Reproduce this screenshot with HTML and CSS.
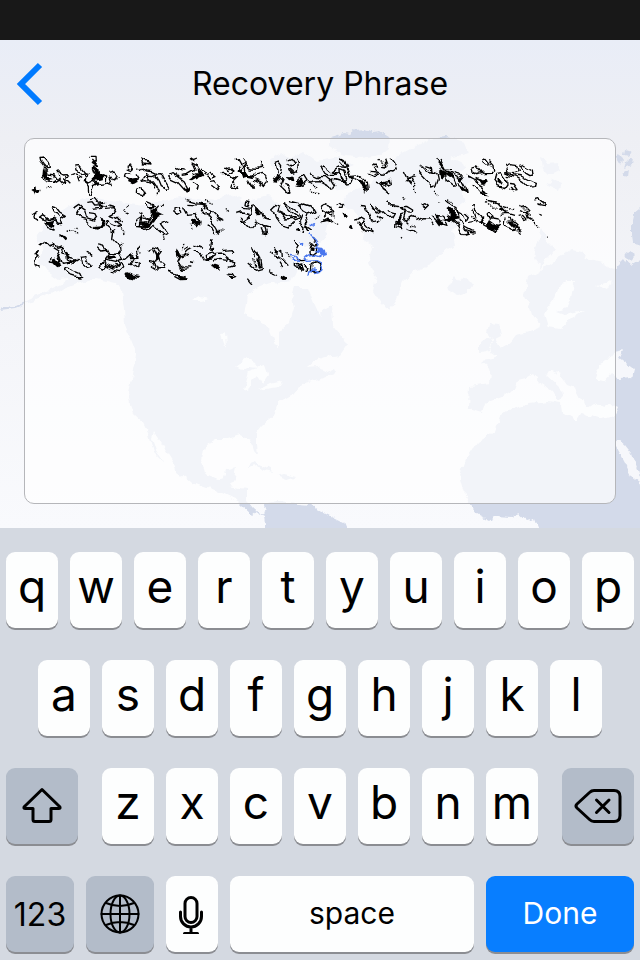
FILE: index.html
```html
<!DOCTYPE html>
<html lang="en">
<head>
<meta charset="utf-8">
<meta name="viewport" content="width=device-width, initial-scale=1">
<title>Recovery Phrase</title>
<link rel="stylesheet" href="styles.css">
</head>
<body>
<div class="status-bar"></div>
<main class="screen">
  <svg class="map" viewBox="0 40 640 488" preserveAspectRatio="xMidYMax slice" aria-hidden="true">
    <defs>
      <filter id="coast" x="0" y="0" width="1" height="1">
        <feTurbulence type="fractalNoise" baseFrequency="0.12" numOctaves="2" seed="4"/>
        <feDisplacementMap in="SourceGraphic" scale="7" xChannelSelector="R" yChannelSelector="G"/>
      </filter>
    </defs>
    <g filter="url(#coast)">
    <g class="land">
      <path d="M0 310L3 307 15 306 23 302 31 299 45 292 61 285 70 278 58 279 45 270 38 260 45 250 36 240 42 228 55 216 70 205 88 196 110 201 145 205 180 197 215 201 230 194 245 202 268 196 280 206 300 201 320 212 330 224 323 240 313 247 300 244 292 254 300 264 293 280 270 283 258 287 247 296 244 315 258 320 270 330 274 340 279 349 279 332 290 322 294 308 292 297 295 288 308 288 314 303 320 316 328 307 332 304 333 325 343 338 347 345 340 355 325 357 315 360 307 367 319 366 325 374 336 369 338 373 320 379 308 382 298 388 293 394 279 402 276 413 262 425 256 433 256 445 257 455 253 450 250 440 240 435 228 439 215 439 205 445 202 461 205 474 217 479 224 477 226 471 237 468 235 478 230 486 246 489 246 501 253 509 259 514 266 509 265 505 278 502 286 503 310 505 327 514 337 519 345 523 350 535 266 535 264 515 257 511 252 515 242 506 237 501 220 493 207 488 190 482 177 472 174 464 164 448 154 432 152 438 157 453 164 463 154 453 149 435 143 423 135 416 131 405 129 391 133 375 137 355 130 337 125 325 124 308 121 292 116 283 97 279 80 283 58 291 35 300 15 308Z"/>
      <path d="M329 138L336 136 343 133 350 134 355 130 365 129 373 132 380 131 390 137 389 148 380 155 360 158 342 155 329 147Z"/>
      <path d="M270 158l12-5 9 6 13-7 13 9 23-4 14 8-17 7 16 8-7 10-30-3-14-9-22 2z"/>
      <path d="M393 158L418 145 430 139 447 137 465 142 468 153 450 158 466 166 456 174 475 181 459 188 466 202 454 211 464 224 452 230 456 244 443 252 431 265 415 271 403 282 397 298 389 310 381 304 373 291 376 278 369 264 374 247 362 239 366 225 353 211 340 205 350 192 370 184 377 170Z"/>
      <path d="M447 286l6-3 2-7 5 6 6-3 7 4-6 9-11 3-8-5z"/>
      <path d="M534 257l8 12 16-12 14-7 9 2 5 7 16 4 12 8-3 10-14 4 10 5 3-5 3-16 8 2 6-11 6 5 17-10V535H540l-6-16-7 2-8-7-7 3-17-1-6 4-12-6-8-10-5-14-4-15 6-15 11-17 17-11 6-16 13-8 16-5 19-2 13 2 1 9 14 8 5-8 12 5 9 2 12-3 4-9-8-4-7 3-9-3-6 4-8-9-5-10-8-3-8-11-7-3-7 3 13 12 7 7-3 4-4 4-6-10-13-9-6-8-8 5-8 2-3 8-12 8-17 6-3 9-14-4 1-22 21-3 1-13-10-8 12-2 5-10 11-6 7-9 13-3 13-5-10-13-3-11-5-9 4-16 12-7 8-13 6-9-6-6-6-17z"/>
      <path d="M492 354l7 3 2-7-5-11 6-3-3-13-9-1-3 11 7 11-5 8zm-12-12l8-6 6 4-5 10-9 2z"/>
      <path d="M616 157l4-3 4 6-3 5zm9-7l6 2-2 4-5-1zm2 9l5-2-1 8-7 3zM622 173l7-4-1 8-5-1zM632 225l3-14 9-7v40l-11-2-1-7zm-8 30l6-4 6 4-5 5zm-7 10l5-5 5 7-5 8-5-2zM540 157l7 3-1 5 12-1 2 6-12 4-6-6zm12 22l9 4-3 8-10-4z"/>
      <path d="M247 468l6-6 11 4 11 6-13-2-5-4zm29 8l8-2 13 3-10 3z"/>
    </g>
    <g class="water">
      <path d="M602 380l-8-2 5-13 6-3 8-10 10-2-5 8 16 12-2 8-12 1-9-6-7 8z"/>
      <path d="M235 367l12-9 9 4 2 6-9-1-7 4zM244 389l5-18 8-3 8-2 3 9-6 9-5-8-5 5-4 10zM258 390l12-6 13-3-4 6zM192 301l7-4 10 2-9 2zM221 335l4-3 1 17zM567 282l7 0-3 16-4 9-10 4 8 3 20-4-14 9-10 9-13-2-4-13 10-13 6-16z"/>
      <path d="M617 439l8 7 7 9 6 16 4 14-10-7-7-15-10-19z"/>
      <path d="M583 398l3 8 5 2-2 7-6-2z"/>
    </g>
    </g>
  </svg>

  <header class="nav">
    <button class="back" type="button" aria-label="Back">
      <svg viewBox="0 0 28 44" aria-hidden="true"><path d="M24 3L5 22 24 41"/></svg>
    </button>
    <h1 class="title">Recovery Phrase</h1>
  </header>

  <div class="field">
    <textarea class="phrase" aria-label="Recovery Phrase"></textarea>
    <svg class="scribble" viewBox="24 145 540 145" aria-hidden="true">
      <defs>
        <filter id="wobble" x="-0.05" y="-0.05" width="1.1" height="1.1">
          <feTurbulence type="fractalNoise" baseFrequency="0.09" numOctaves="1" seed="7"/>
          <feDisplacementMap in="SourceGraphic" scale="10" xChannelSelector="R" yChannelSelector="G"/>
        </filter>
      </defs>
      <g filter="url(#wobble)">
      <g transform="translate(24 145) scale(.333333)">
        <path class="ink" d="M51 40l10-1 13 15 2 13-7 1-8-8-8-11zM59 65l11 13 3 12 17 2 8 12-13 8-21-1-14-12 9-10 3 13 14 4-8-12-9-14M94 83l13-2 11 6 15-1 4 10-12 3-9 9 3 10-10-7-9-9 7-7M114 100l10 12 9 9M145 89l12-5 13 6-9 5 5 14M153 60l12-1 14 18-9 4-14-9zM196 40h20l1 11-9 7 13 9-16 5 5 14 7 12M205 48l13 13M189 83l-8 25 14 12 16-8 12 7-12 6-9 23-8-3-1-18-9-15 1-17-6-15zM233 92l15 4-1 19-18 3-15-10M250 82l17-4 13 11-8 13-15-6 8 23-14-5M305 65l8-5 12 8-7 6-13-5M322 83l-18-3-3 13 14 12 20 9 8-13-10-16M354 43l14 5 7 15-16-3zM347 67l15 11 25 2 13 6-14 6-20-2-12 17 14-3 20 7 10 14 8 19-11 6M363 84l23 25 6 21M397 87l14-1 13 24 12 19-8 7-16-8-6-15-13-17zM430 83l12-3 15 12 20 15 15 26-10 2-23-26-20-9-9-12M450 67l20 9 18 2M470 91l20-3 20-12-9-22 20 10 5 17-18 9M498 40l10 7 11-5M509 112l14 8-4 18M341 134l12-5 6 12-7 11-12-4zM200 164l14-4 10 12 16-3-12 8 18 8M190 175l20-2 8 10 20-1-6 8-25 3M30 205l9-5-3 15 5 15M82 178l14 5 14 18 17 10-14 9 6 19-15-2-12-15-16-1-17-12-10 8 14 11M82 180l6 20 22 12M55 226l35-10M61 234l10 14 19 4 2-15M151 187l13-9 9 8-12 11-6 14 16 14 16 5 17 18 28-3 6-17-8-12M165 190l17 12 5 19 22 7 9-12-6-11-17-2M243 190l24-2 8 12-17 9 22 8 9 14-16-2 21 15-13 6-22-10-9-16-7 21 16 14M250 180l20 6M303 181l8-6M304 202l11 6M343 207l10-4 3 14-14 10-4 14 20 2 18-19-16-13M372 170l14 6 5 12-16-1-9-10M360 219l15 7 13-22 13-16M388 240l35 30 12-6-20-28 18-8M357 216l-5 24 18 13 22-13M408 190l13-12M450 182l15 2 9 23-12 7-12-17zM477 185l14 26 25-3 12 22-9 13M488 164l44 12M490 175l41 3 10 9"/>
        <path class="ink" d="M32 327l14-10-7 10 9 4-14 14-1 17 14 8M50 301l15-12 11 11 12-6 8 16 12-4 6 18 22 5M83 308l16 10 9 25-8 14-18-3 2-18M110 309l6-2 12 17 2 21 20 10 14-9M105 328l10 27 38-5M169 337l20-2 15 31-14 4-18-16zM188 322l17 6M120 374l10-6 40 17 6 12-11 2-26-8zM220 296l22 5 6 18-12 2-15-14M260 264l9-7-3 26 16 17 4 22-14 8-18-5-7-14M244 348l14-20 28-1 10 16-20 12-14-3zM227 356l15-7 6 15-8 9-12-6zM247 358l25 12 18-11-5-10M289 356l9-4 4 10-18 18-18-4M299 342l18-15 14 9-11 17 24 18 2-15-16-10M346 303l-12 14 5 17-18 1M377 317l10-11 13 5 10 17-8 10 6 15 15 2-4 15-24 2-20-12M389 311l10 20-1 15-10 12M369 346l17 3 10 15M455 315l11 16-8 16 8 13 14 10 14-2M462 331l18-4 14-14 11-6M457 348l20 14 28 1M481 313l13-8M483 325l12 4M498 347l12 3M430 378l22 8 31 5 3 12-17 1-18-10M514 297l23 10M512 317l18 12 8 14"/>
        <path class="blob" d="M22 133l8-1 7-5 3 9 13-2-4 13-10-6-3 8-5-11zM57 68l13 12 4 15 15 7-19 3-15-13zM209 69l17 7 2 13 11 5-3 9-18 4-8 8-6-9 11-11zM317 101l23-3 4 13-18 7-14-7zM480 132l18-2 3 11-10 5zM515 70l15 8 5 14-12 6-13 8-13-1 21-15zM385 190l9 3 5 14 14 7-14 4-10 16-6-8 4-18zM55 218l19 10 17-4-5 14-16-1zM350 232l14-4 8 6 12-12 4 8-10 14-12 3zM205 243l22-2 9-11 2-17 6 16-8 18-20 4zM106 266l10 6 8 15-5 5-12-13zM80 230l10 9-7 7-20-9zM94 334l12 18 2 8-12 4-8-12zM124 320l13 15 12 10-18-4zM252 336l22-2 6 8-20 7-10-3zM270 359l16 3-1 7-13-5zM306 386l12-1 12 12 13 2-6 6-21-5-12-9zM396 331l9-6 1 22-8 6zM453 310l7 10 11 7-14 9zM462 386l25 11-8 8-16-7zM508 223l12 6 11 5-15 8-10 1z"/>
        <path class="speck" d="M97 76l12 17M124 90l9 10M270 100l17-4M340 65l18 14M412 99l12 15M453 83l8 12M150 251l12-1M276 217l22 15M282 243l23 25M297 190l12 15M131 258l32 6M405 251l22 20M52 338l-10-15M64 290l22 12M187 344l10 15M280 309l19-16M337 309l12 13M376 351l28 18M418 270l2 20M434 380l34 9M480 300l-8 15M498 239l6 15M65 130l15 3"/>
      </g>
      <g transform="translate(200 145) scale(.333333)">
        <path class="ink" d="M0 69l13 9-5 7M14 87l15-6 22 17-18 6zM33 112l14-2 14 13-7 14-17-13M65 89l17-2 13 13 18-1-18 18-3 10 19 9 5-9M77 70l14-4 11 9-13 7zM108 40l12 22 17-9M125 42l10 15 18 12 18 1 17-4-4-15M120 78l15-18 3 20 22 13 21-8 16 10 5 15-10 12-16-10-20-9M145 101l18 30M165 98l14 23M219 93l10 5 2-23-6-20 10-4 10 14-4 21-10 7M236 98l13 11-7 17 17 17 11-5-5-12-12-5M257 45l11-5 12 17-9 6-12-8M283 40l9 16-3 21-11 5-10-9M270 68l13 12M291 104l10-9 13-1 10 16-18 14-18-6M303 97l9 19M330 87l17 8 34-1 14 12 12 19-15 7-13-15-18-10-23 1-12 11M363 64l12-4 20 18 15 9-22 3-18-13zM401 80l20-12 18 3 7 20 14 14-4 10-19 2-15-11-3-16zM420 77l14 5 6 17-10 10-9-14zM418 41l12 6 10 16-6 4-14-16M395 102l20 6 23 3M450 91l15-1 18 8 16 14 3 20-12-4-12-18-14-8zM517 67l8-7 12 7M512 82l26 2M502 87l18 8 20-8M0 178l14 2 16 19-4 12-13-5-13-20M14 196l9 22 24 25 12 20M30 197l21 21 16 8M20 240l15 4 10 20M137 171l10 1-5 14-7-4zM112 209l16-5 16 5 4 11-15 10-18 3M128 190l22 3 5-9 10-2 19 20 8 14 17 5M148 192l3 17-10 12M120 222l30 29 22-24M167 230l25 13 8 23-11-3-6-13M190 246l20 6M214 190l12-12 13 5-5 15 20 24 29-3M232 200l34 13 14 14 15-5-1-15-18-12-24-16M215 186l8 25 19 24 24 8 15-11M250 179l22 25 19 13M270 171l33 9M305 184l10-7 19 6 8 14-13 9-18-9zM300 186l15 12M307 208l-8 21 16 13-3 19M325 205l-6 18 10 29M341 249l-21-14M366 184l10-6 15 6 10 16-16 9-17-10zM392 182l4 15M366 220l13-12 18 5M411 173l10-5 10 9-2 8-13-2M482 187l13 2 10 24 22 15M510 180l12 17 16 7M463 226l12-8 14 8-7 12M470 230l34 32 9 4-2-10-26-28"/>
        <path class="ink" d="M13 325l22-6 12 11-8 12-24 1zM46 325l28-1 16 12-4 13-29-3-15 5M70 314l24-3 5 12M83 337l21 13-2 13-13 4M36 282l-3 18-4 9M77 384l23 2 8 12M142 353l24 20 21-6-5-30-22-21M148 310l14 15 1 15M172 319l8 15-3 14M223 308l10 16 15-8 2 23M224 334l12 2 13 9 16 17M234 347l8 13M280 291l12 15-8 15 12 6M291 341l12 6 18-1M289 360l17-3 5 11-8 7-14-8zM312 354l12 11-7 9M333 359l13-6 14 8 2 12-16 8-15-10zM328 309l5-13 10 5 8-4-2 27-10 7-12-4zM337 279l7 14M145 401l12 15M201 377l33 12"/>
        <path class="blob" d="M115 62l10 14 18-2 7 14 18-6-9 14-17-4-12 8-5-15-12-7zM222 100l13-8 5 6-3 9-12-1zM258 96l14 1 8-7 3 14-14 5-14-8zM296 101l11 1 5 12-9 9-12-10zM480 110l10 1 9 15 1 14-12-9zM166 185l10 5 8 20-10 1-9-14zM367 226l12-6 12 4-4 4 11 2-7 5-14-6-17 4zM289 248l10-3 5 7-5 6-11-2zM427 206l11 1 3 8-8 2zM443 239l9 2 2 8-5 4-8-5zM36 305l7 5-5 7-8-6zM17 337l30-5-4 6-15 8-13-4zM32 358l23 7 8 9-21 2zM79 388l14 3 15 9-16 3zM170 341l10 9 5 13-11 2-5-12zM243 394l8-5 9 6-2 9-10 1-6-5zM227 319l13 2-8 9-9-4zM332 304l9 1-1 14-7-2zM299 360l10 6-8 6-7-5zM530 226l10 5-9 7z"/>
        <path class="speck" d="M80 66l20 3M99 96l8 31M155 115l10 17M327 113l29 17M330 134l30 17M350 89l16 22M15 170l23 8M50 255l22 4M78 184l5 10M270 176l14 3M342 222l12-10M390 225l30 18M398 205l8 15M210 323l17 15M260 322l14 17M154 343l15 23"/>
        <path class="accent-line" d="M327 262l5 16 12 8 12 16-9 5 21 7M303 294l8 2-2 8-7-5zM267 325l13 3 13 9 5 12-13-3-8-12M315 340l10-7 18-2 14 4 14-10M315 341l7 8 20-1 18 9 6 14-8 8M324 388l2-13 13-3 15 8-12 3M335 237l8-4 4 5"/>
        <path class="accent-fill" d="M352 307l20 1 6 8 3 14-10 3-10-8-18-4 14-5z"/>
      </g>
      <g transform="translate(375 145) scale(.333333)">
        <path class="ink" d="M0 67l9 12 18 9 15-7M28 41l8 22-12-2M42 44l14 18 5 13-13 9-12-3M0 107l18 9 10 21 14 10M18 111l25-8 3 12-18 10M91 78l8 16-3 15 10 13M91 108l14-10 18-6M107 115l7-14M131 65l13 2 12 11 16 4-3-17-18-6M130 82l18 19 15 16-1 9 17-3 8-23-4-18-15-5M179 43l18 19 15 19 22 6 25 14 16 31 1 7-12-5-13-22M192 45l16 30 20 2M212 88l1 20 20 16 11-6-12-27M239 83l19 5 10 12-9 8-12-17M288 63l12-3 13 15 9 10-14 4-17-10zM322 45l8-5 14 18-11 3-11-9M343 40l14 15 2 20-12 10-23 1M278 89l25 13 8 13 14 9-5 16 18 9-15-2-16-18-14-9M302 97l17 8 11 13M363 83l15-3 14 20 1 17-10 14-14-6-11-16zM389 64l15-5 20 2 6 17-12 5-21-3zM435 65l12-4 25 14 2 15-9 2-22-13zM395 91l25 5 22 14 16 17 23-2 3-13-22-7-24-12-30-5-18-8M399 112l15 2 12 17-11 3-8-11M0 188l20 17 14 13 17-2 7-13-20-6M0 207l18 17M34 171l17 4 25 3 13 22M82 185l13-1 18 11-2 10-16-2zM73 211l18-7-5 18 14 13M60 226l22 6-5 22-18-7zM94 228l14-10 18 3M95 249l17 6 14 12M138 183l9-4 10 8-6 6zM130 230l15-9 20 1 10 15M182 205l18 3 13 18 6 21-16-5-14-20zM173 212l12 12 14 19M213 169l17 8 16 8 2 24-19 9-16-11M232 219l26 37 13 14 10-3-14-25-19-16M241 190l18 11 13 28 8-14-14-13M272 246l30 16M290 181l11-3-3 20 15 14 9 18-21-4M290 198l8 22M282 232l17-3M336 166l31 5 14 16 13 4M334 209l8-5 12 10-9 9-11-5zM320 217l-2 13 22 13 19 14 18-17-3-17-22-4M380 211l20-3 20 6M393 220l-3 22 21 12 12-15-20-18M407 231l20 24M434 185l14-4 14 14-10 9-17-7M434 217l15-3 11 12M457 203l5 17 12 7M478 165l13-4 17 15-3 6-19-4M420 248l17 18"/>
        <path class="blob" d="M30 84l12-5-12 9zM17 109l18-4 6 10-18 6zM94 111l9-3 5 10-8 5zM190 85l10-9 14 9 14 2 12 13-15 2-14-10-8 9-10-4zM256 122l10 3 12 15-15-4zM274 86l17 8-10 1zM311 99l10 4 14-1 3 12-17 2zM322 129l9 4 7 8-14-1zM367 101l8 1 9 13-5 7-11-8zM195 222l16-2 13-9-3-20 8-4 11 9-1 15 12 9-18 3-4 8-10-6zM188 212l14 18 10 14-8 0-14-16zM73 207l8 6-6 17 5 12-12 3-9-8 8-15zM182 204l8 5-4 5zM342 225l20 15 12 2-8 12-16-4-15-12zM378 187l14 14 9 2-7 5-23-15zM399 230l7-1 15 15-9 1zM497 206l8 2 3 5-7-2zM444 219l13 7-9 3zM185 167l14 5-3 2zM275 255l20 6 7 5-16-1zM519 276l3 4-3 2z"/>
        <path class="speck" d="M8 43l20 13M25 128l17 19M112 110l13 28M136 60l32 15M180 138l13 8M260 92l8 23M292 82l20 8M344 47l14 24M400 132l20 7M42 177l34 2M110 212l20 12M105 239l20 5M222 168l20 6M286 214l20 18M336 173l30 15M350 170l25 4M430 181l25 14M458 199l10 18M484 177l22-4M477 231l9 14M412 252l22 7M80 154l8 7M75 274l4 4M395 190l12 3M411 192l4-6"/>
      </g>
      </g>
    </svg>
  </div>
</main>

<section class="keyboard" aria-label="Keyboard">
  <div class="row">
    <button class="key">q</button><button class="key">w</button><button class="key">e</button><button class="key">r</button><button class="key">t</button><button class="key">y</button><button class="key">u</button><button class="key">i</button><button class="key">o</button><button class="key">p</button>
  </div>
  <div class="row row-home">
    <button class="key">a</button><button class="key">s</button><button class="key">d</button><button class="key">f</button><button class="key">g</button><button class="key">h</button><button class="key">j</button><button class="key">k</button><button class="key">l</button>
  </div>
  <div class="row row-shift">
    <button class="key dark side" aria-label="Shift">
      <svg class="icon" viewBox="0 0 40 40" aria-hidden="true"><path class="line3" d="M20 3.500L2.500 20.500Q1 22.500 3.500 22.500H11V33.500Q11 35.500 13 35.500H27Q29 35.500 29 33.500V22.500H36.500Q39 22.500 37.500 20.500Z"/></svg>
    </button>
    <div class="letters">
      <button class="key">z</button><button class="key">x</button><button class="key">c</button><button class="key">v</button><button class="key">b</button><button class="key">n</button><button class="key">m</button>
    </div>
    <button class="key dark side" aria-label="Delete">
      <svg class="icon icon-wide" viewBox="0 0 48 40" aria-hidden="true"><path class="line3" d="M20 4.500H40Q46 4.500 46 10.500V29.500Q46 35.500 40 35.500H20Q17.500 35.500 15.500 33.500L3 22Q1 20 3 18L15.500 6.500Q17.500 4.500 20 4.500Z"/><path class="line3" d="M22.500 14L35 26.500M35 14L22.500 26.500"/></svg>
    </button>
  </div>
  <div class="row">
    <button class="key dark num">123</button>
    <button class="key dark globe" aria-label="Next keyboard">
      <svg class="icon" viewBox="0 0 40 40" aria-hidden="true"><g class="line2"><circle cx="20" cy="20" r="18.500"/><ellipse cx="20" cy="20" rx="9.500" ry="18.500"/><path d="M20 1.500V38.500M1.500 20H38.500M6 9Q20 15 34 9M6 31Q20 25 34 31"/></g></svg>
    </button>
    <button class="key mic" aria-label="Dictate">
      <svg class="icon" viewBox="0 0 40 40" aria-hidden="true"><g class="line3"><rect x="13" y="3.500" width="12" height="25" rx="6"/><path d="M8.500 18V22.500A10.500 10.500 0 0 0 29.500 22.500V18M19 33V39M12.500 39.500H25.500"/></g></svg>
    </button>
    <button class="key space">space</button>
    <button class="key done">Done</button>
  </div>
</section>
</body>
</html>
```
FILE: styles.css
```css
* {
  box-sizing: border-box;
}

body {
  margin: 0;
  min-height: 100vh;
  display: flex;
  flex-direction: column;
  font-family: Inter, "Liberation Sans", sans-serif;
  color: #000;
  background: #d4d9e1;
}

.status-bar {
  height: 40px;
  background: #181818;
}

.screen {
  position: relative;
  flex: 1;
  display: flex;
  flex-direction: column;
  padding-bottom: 24px;
  overflow: hidden;
  background: linear-gradient(#e9edf7, #eeeff4 20%, #f4f5f9 60%, #f9fafd);
}

.map {
  position: absolute;
  inset: 0;
  width: 100%;
  height: 100%;
}

.land {
  fill: #d3daea;
}

.water {
  fill: #f6f7fb;
}

.nav {
  position: relative;
  display: grid;
  grid-template-columns: 60px 1fr 60px;
  align-items: center;
  height: 88px;
}

.back {
  display: flex;
  padding: 0 0 0 16px;
  border: 0;
  background: none;
}

.back svg {
  width: 28px;
  height: 44px;
  fill: none;
  stroke: #007aff;
  stroke-width: 6;
}

.title {
  margin: 0;
  text-align: center;
  font-size: 32px;
  line-height: 40px;
  font-weight: 400;
}

.field {
  position: relative;
  flex: 1;
  display: flex;
  margin: 10px 24px 0;
}

.phrase {
  flex: 1;
  min-height: 180px;
  padding: 16px;
  border: 1px solid #b5b6ba;
  border-radius: 10px;
  background: rgba(255, 255, 255, 0.7);
  font: 300 34px/40px Inter, "Liberation Sans", sans-serif;
  resize: none;
  outline: 0;
}

.scribble {
  position: absolute;
  left: 0;
  top: 7px;
  width: 540px;
  height: 145px;
  max-width: 100%;
  overflow: visible;
  pointer-events: none;
}

.ink,
.speck,
.accent-line {
  fill: none;
  stroke: #000;
  stroke-width: 4;
  stroke-linejoin: round;
}

.speck {
  stroke-dasharray: 4 3;
}

.blob {
  fill: #000;
}

.accent-line {
  stroke: #4876ee;
}

.accent-fill {
  fill: #4876ee;
}

.keyboard {
  display: flex;
  flex-direction: column;
  gap: 32px;
  padding: 24px 6px 8px;
  background: #d4d9e1;
}

.row,
.letters {
  display: flex;
  gap: 12px;
}

.row-home {
  padding: 0 32px;
}

.row-shift {
  gap: 24px;
}

.letters {
  flex: 436;
}

.key {
  flex: 1 1 0;
  min-width: 0;
  height: 76px;
  display: flex;
  align-items: center;
  justify-content: center;
  padding: 0 0 8px;
  border: 0;
  border-radius: 9px;
  background: #fdfefe;
  box-shadow: 0 2px 0 #8b8d92;
  color: #000;
  font: 400 46px/56px Inter, "Liberation Sans", sans-serif;
}

.dark {
  background: #b3bcc9;
}

.side {
  flex-grow: 72;
}

.num,
.globe {
  flex-grow: 68;
}

.mic {
  flex-grow: 52;
}

.space {
  flex-grow: 244;
}

.done {
  flex-grow: 148;
  background: #087eff;
  color: #fff;
}

.num,
.space,
.done {
  padding: 0 0 2px;
  font-size: 30px;
  line-height: 40px;
}

.num {
  padding: 2px 0 0;
  font-size: 32px;
}

.side,
.globe,
.mic {
  padding: 0;
}

.icon {
  width: 40px;
  height: 40px;
  flex: none;
}

.icon-wide {
  width: 48px;
}

.line2,
.line3 {
  fill: none;
  stroke: #000;
  stroke-width: 3;
  stroke-linecap: round;
  stroke-linejoin: round;
}

.line2 {
  stroke-width: 2;
}
```
